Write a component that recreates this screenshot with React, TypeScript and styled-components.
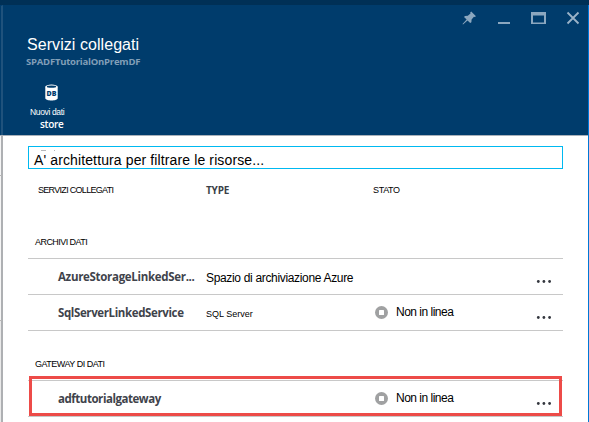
import React from "react";
import styled, { createGlobalStyle } from "styled-components";

const GlobalStyle = createGlobalStyle`
  * { box-sizing: border-box; }
  html, body { margin: 0; padding: 0; overflow: hidden; }
`;

const sans = `"Liberation Sans", Arial, sans-serif`;
const humanist = `"Open Sans", "Noto Sans", sans-serif`;

const Page = styled.div`
  width: 589px;
  height: 422px;
  display: flex;
  flex-direction: column;
  overflow: hidden;
  background: #fff;
`;

const TopStrip = styled.div`
  height: 5px;
  flex: none;
  background: #003056;
`;

const Body = styled.div`
  flex: 1;
  min-height: 0;
  display: flex;
`;

const Gutter = styled.div`
  width: 3px;
  flex: none;
  display: flex;
  flex-direction: column;
`;

const GutterPart = styled.div<{ $height: number; $fill: string; $edge: string; $line?: string }>`
  height: ${(p) => p.$height}px;
  flex: none;
  background: ${(p) => p.$fill};
  border-right: 2px solid ${(p) => p.$edge};
  border-top: 1px solid ${(p) => p.$line ?? p.$fill};
`;

const Blade = styled.main`
  flex: 1;
  min-width: 0;
  border-right: 1px solid #0078d7;
`;

const Header = styled.header`
  height: 131px;
  background: #003c6c;
  border-bottom: 1px solid #a9b1ba;
  display: flex;
  justify-content: space-between;
`;

const HeaderMain = styled.div`
  padding: 30px 0 0 24px;
`;

const WindowControls = styled.div`
  display: flex;
  align-items: flex-start;
  padding: 6px 7px 0 0;
`;

const Label = styled.div<{
  $size: number;
  $color?: string;
  $font?: string;
  $weight?: number;
  $track?: number;
  $top?: number;
  $left?: number;
  $line?: number;
}>`
  font-family: ${(p) => p.$font ?? sans};
  font-size: ${(p) => p.$size}px;
  font-weight: ${(p) => p.$weight ?? 400};
  color: ${(p) => p.$color ?? "#000"};
  letter-spacing: ${(p) => p.$track ?? 0}px;
  line-height: ${(p) => p.$line ?? 16}px;
  margin-top: ${(p) => p.$top ?? 0}px;
  margin-left: ${(p) => p.$left ?? 0}px;
  white-space: nowrap;
`;

const Command = styled.button`
  display: block;
  border: 0;
  padding: 0;
  margin: 15px 0 0 3px;
  background: none;
  text-align: left;
`;

const DbIcon = styled.svg`
  display: block;
  margin-left: 15px;
`;

const Content = styled.div`
  padding: 10px 25px 0;
`;

const Search = styled.div`
  position: relative;
  height: 23px;
  border: 1px solid #00b9f1;
  padding-left: 5px;
  overflow: hidden;
  display: flex;
`;

const Mark = styled.span<{ $left: number; $top: number; $width: number }>`
  position: absolute;
  left: ${(p) => p.$left}px;
  top: ${(p) => p.$top}px;
  width: ${(p) => p.$width}px;
  height: 1px;
  background: #b5b7ba;
`;

const Columns = styled.div`
  height: 57px;
  display: grid;
  grid-template-columns: 178px 167px 1fr;
  padding-top: 13px;
`;

const Section = styled.div<{ $height: number; $top: number }>`
  height: ${(p) => p.$height}px;
  padding: ${(p) => p.$top}px 0 0 7px;
`;

const Row = styled.div`
  height: 36px;
  border-top: 1px solid #c8c8c8;
  display: grid;
  grid-template-columns: 30px 148px 169px 21px 1fr 27px;
  align-items: start;

  & > * { grid-row: 1; }
`;

const Name = styled.div` grid-column: 2; `;
const Type = styled.div` grid-column: 3; `;
const Status = styled.div`
  grid-column: 4 / 6;
  display: flex;
`;
const StopIcon = styled.svg<{ $top: number }>`
  flex: none;
  width: 13px;
  height: 13px;
  margin-top: ${(p) => p.$top}px;
`;
const More = styled.svg`
  grid-column: 6;
  width: 16px;
  height: 4px;
  margin-top: 21px;
`;

const Table = styled.div`
  height: 73px;
  border-bottom: 1px solid #c8c8c8;
`;

const GatewayTable = styled.div`
  position: relative;
  height: 37px;
  border-bottom: 1px solid #c8c8c8;
`;

const Highlight = styled.div`
  position: absolute;
  inset: -4px 1px 0 1px;
  border: 3px solid #ed4b48;
  pointer-events: none;
`;

const Stopped = ({ top }: { top: number }) => (
  <StopIcon viewBox="0 0 13 13" $top={top}>
    <circle cx="6.5" cy="6.5" r="6.5" fill="#a0a1a2" />
    <rect x="4" y="4" width="5" height="5" rx=".5" fill="#fff" />
  </StopIcon>
);

type ItemProps = {
  name: string;
  nameTrack: number;
  type?: React.ReactNode;
  offline?: boolean;
};

const Item = ({ name, nameTrack, type, offline }: ItemProps) => (
  <Row>
    <Name>
      <Label $size={11.5} $font={humanist} $weight={700} $color="#3f434b" $track={nameTrack} $top={10}>
        {name}
      </Label>
    </Name>
    {type && <Type>{type}</Type>}
    {offline && (
      <Status>
        <Stopped top={11} />
        <Label $size={12} $track={-0.5} $top={9} $left={8}>Non in linea</Label>
      </Status>
    )}
    <More viewBox="0 0 16 4">
      <circle cx="2.3" cy="1.5" r="1.4" fill="#34373f" />
      <circle cx="7.9" cy="1.5" r="1.4" fill="#34373f" />
      <circle cx="13.6" cy="1.5" r="1.4" fill="#34373f" />
    </More>
  </Row>
);

export default function App() {
  return (
    <Page>
      <GlobalStyle />
      <TopStrip />
      <Body>
        <Gutter>
          <GutterPart $height={130} $fill="#003c6c" $edge="#1f527c" />
          <GutterPart $height={40} $fill="#f5f5f5" $edge="#aeb0b3" $line="#a9b1ba" />
          <GutterPart $height={145} $fill="#f5f5f5" $edge="#aeb0b3" $line="#b8b8b8" />
          <GutterPart $height={102} $fill="#e9e9e9" $edge="#aeb0b3" $line="#b8b8b8" />
        </Gutter>
        <Blade>
          <Header>
            <HeaderMain>
              <Label $size={16} $color="#fff" $track={0.06} $line={20}>Servizi collegati</Label>
              <Label $size={9.5} $font={humanist} $weight={700} $color="#829fb8" $track={-0.22} $line={14} $left={-1}>
                SPADFTutorialOnPremDF
              </Label>
              <Command>
                <DbIcon width="13" height="18" viewBox="0 0 13 18">
                  <path d="M.3 2.700v11.500c0 1.200 2.700 2.300 6.200 2.300s6.200-1.100 6.200-2.300v-11.500z" fill="#fff" />
                  <ellipse cx="6.500" cy="2.700" rx="6.200" ry="2.200" fill="#fff" />
                  <ellipse cx="6.500" cy="2.700" rx="4.700" ry="1.100" fill="#003c6c" />
                  <text x="6.500" y="11.800" textAnchor="middle" fontFamily="Open Sans" fontWeight="800" fontSize="7" fill="#003c6c">DB</text>
                </DbIcon>
                <Label $size={8.5} $color="#fff" $track={-0.35} $line={12} $top={4}>Nuovi dati</Label>
                <Label $size={10} $font={humanist} $weight={600} $color="#fff" $track={-0.3} $line={12} $left={10}>store</Label>
              </Command>
            </HeaderMain>
            <WindowControls>
              <svg width="120" height="16" viewBox="0 0 120 16">
                <g fill="#8ba7bf">
                  <path d="M10.200 0.500 15 5.200 13.600 6 12.900 5.800 10.600 8.500 10.400 11.300 9.200 12 6.500 9.400 2 13.500 1.500 13 5.600 8.500 3 5.900 4 5 6.800 4.800 9.500 2.500 9.200 1.500z" />
                  <rect x="37" y="11" width="12" height="2" />
                  <path d="M70 1h15v12H70zM72 4.500v7h11v-7z" fillRule="evenodd" />
                </g>
                <path d="m106.500 1.500 11 11m0-11-11 11" stroke="#9bb3c8" strokeWidth="1.800" />
              </svg>
            </WindowControls>
          </Header>
          <Content>
            <Search>
              <Mark $left={12} $top={3} $width={5} />
              <Mark $left={25} $top={3} $width={1} />
              <Label $size={14} $track={0.12} $top={5}>A' architettura per filtrare le risorse...</Label>
            </Search>
            <Columns>
              <Label $size={9} $left={10} $track={-0.7}>SERVIZI COLLEGATI</Label>
              <Label $size={10} $font={humanist} $weight={700} $color="#3b3f47" $track={-0.2}>TYPE</Label>
              <Label $size={9} $track={-0.35}>STATO</Label>
            </Columns>
            <Section $height={32} $top={8}>
              <Label $size={9} $track={-0.55}>ARCHIVI DATI</Label>
            </Section>
            <Table>
              <Item
                name="AzureStorageLinkedSer..."
                nameTrack={-0.31}
                type={<Label $size={12} $track={-0.33} $top={11}>Spazio di archiviazione Azure</Label>}
              />
              <Item
                name="SqlServerLinkedService"
                nameTrack={-0.38}
                type={<Label $size={9} $top={11}>SQL Server</Label>}
                offline
              />
            </Table>
            <Section $height={49} $top={25}>
              <Label $size={9} $track={-0.5}>GATEWAY DI DATI</Label>
            </Section>
            <GatewayTable>
              <Item name="adftutorialgateway" nameTrack={-0.46} offline />
              <Highlight />
            </GatewayTable>
          </Content>
        </Blade>
      </Body>
    </Page>
  );
}
